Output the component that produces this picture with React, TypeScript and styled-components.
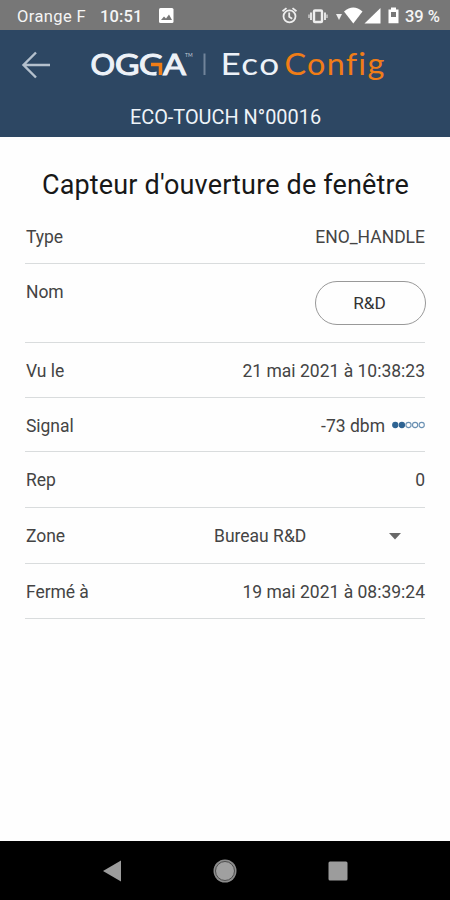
import React from "react";
import styled, { createGlobalStyle } from "styled-components";

const GlobalStyle = createGlobalStyle`
  *, *::before, *::after { box-sizing: border-box; }
  body { margin: 0; background: #fff; }
`;

const Screen = styled.div`
  width: 450px;
  height: 900px;
  display: flex;
  flex-direction: column;
  overflow: hidden;
  background: #fefefe;
  color: #444;
  font-family: Roboto, "Liberation Sans", sans-serif;
`;

const StatusBar = styled.div`
  flex: none;
  height: 30px;
  display: flex;
  align-items: center;
  justify-content: space-between;
  padding: 2px 10px 0 17px;
  background: #777;
  color: #f5f5f5;
  font-size: 16.5px;
  font-weight: 500;
  white-space: nowrap;
`;

const StatusGroup = styled.div`
  display: flex;
  align-items: center;
`;

const Carrier = styled.span`
  width: 83px;
  font-weight: 400;
  letter-spacing: 0.4px;
`;

const Clock = styled.span`
  width: 59px;
  letter-spacing: 0.1px;
`;

const Glyph = styled.svg`
  display: block;
  flex: none;
`;

const Header = styled.header`
  flex: none;
  height: 107px;
  display: flex;
  flex-direction: column;
  background: #2d4763;
`;

const Brand = styled.div`
  height: 70px;
  display: flex;
  align-items: center;
  gap: 16px;
`;

const BackButton = styled.button`
  width: 72px;
  height: 70px;
  padding: 0;
  display: grid;
  place-items: center;
  border: 0;
  background: none;
`;

const Device = styled.div`
  padding: 3px 0 0 1px;
  text-align: center;
  line-height: 30px;
  font-size: 19.9px;
  color: #eef3f8;
`;

const Content = styled.main`
  flex: 1;
  padding: 0 25px;
`;

const Title = styled.h1`
  margin: 0;
  padding: 28px 0 0 1px;
  height: 72px;
  text-align: center;
  white-space: nowrap;
  font-size: 27px;
  line-height: 40px;
  font-weight: 400;
  letter-spacing: 0.16px;
  color: #181818;
`;

const Row = styled.div<{ $height: number }>`
  height: ${(p) => p.$height}px;
  padding-top: 15px;
  display: flex;
  justify-content: space-between;
  align-items: flex-start;
  border-bottom: 1.5px solid #d9dcdd;
  font-size: 17.5px;
  line-height: 26px;
  white-space: nowrap;
`;

const Label = styled.span`
  padding-left: 1px;
  letter-spacing: -0.05px;
`;

const Value = styled.span`
  display: flex;
  align-items: center;
  gap: 7px;
`;

const NameButton = styled.button`
  width: 111px;
  height: 44px;
  margin: 2px -1px 0 0;
  padding: 0 2px 0 0;
  border: 1.4px solid #999;
  border-radius: 22px;
  background: transparent;
  color: #333;
  font: 400 17.2px Roboto, sans-serif;
`;

const ZoneSelect = styled.div`
  width: 211px;
  padding-right: 23px;
  display: flex;
  justify-content: space-between;
  align-items: center;
`;

const NavBar = styled.nav`
  flex: none;
  height: 59px;
  padding: 0 56px;
  display: grid;
  grid-template-columns: repeat(3, 1fr);
  place-items: center;
  background: #000;
`;

const LogoText = styled.text<{ $spacing?: number }>`
  font-family: Lato, sans-serif;
  letter-spacing: ${(p) => p.$spacing ?? 0}px;
  font-variant-ligatures: none;
`;

const StatusIcons = () => (
  <Glyph width="125" height="22" viewBox="280 5 125 22" fill="none">
    <g stroke="#eee" strokeWidth="1.8">
      <circle cx="289.5" cy="16.3" r="6" />
      <path d="M289.2 12.5v4.3l3 2M282.5 11.3l4-3.2M296.5 11.3l-4-3.2" />
    </g>
    <rect x="314" y="10.5" width="8" height="11.5" rx="1" stroke="#eee" strokeWidth="2.4" />
    <path d="M311 12.5v7.5M325 12.5v7.5" stroke="#e2e2e2" strokeWidth="2" />
    <path d="M309 14.5v3.5M327 14.5v3.5" stroke="#ccc" strokeWidth="1.5" />
    <path d="M336 14h6l-3 6z" fill="#eee" />
    <path d="M344 11.5Q353.300 3.500 362.500 11.500L353.300 23.500z" fill="#fff" />
    <path d="M364.5 23.5L380.500 8v15.500z" fill="#fff" />
    <path d="M388.5 9.5h2.500V7.500h5v2h2.500v13.800h-10z" fill="#fff" />
    <rect x="391" y="12" width="5" height="5" fill="#777" />
  </Glyph>
);

const Logo = () => (
  <Glyph width="300" height="50" viewBox="88 40 300 50">
    <defs>
      <clipPath id="accentCut">
        <path d="M136 48h30v13.500h-16v8h6.500v10H136z" />
      </clipPath>
    </defs>
    <g fontSize="29.5" fill="#edf2f8" stroke="#edf2f8" strokeWidth="1.1">
      <LogoText x="90.5" y="75" textLength="24.5" lengthAdjust="spacingAndGlyphs">O</LogoText>
      <LogoText x="115" y="75" textLength="24.5" lengthAdjust="spacingAndGlyphs">G</LogoText>
      <g clipPath="url(#accentCut)">
        <LogoText x="139" y="75" textLength="24.5" lengthAdjust="spacingAndGlyphs">G</LogoText>
      </g>
      <LogoText x="163" y="75" textLength="23" lengthAdjust="spacingAndGlyphs">A</LogoText>
    </g>
    <path d="M151 64.500h9.500V75" fill="none" stroke="#f07d17" strokeWidth="3.500" />
    <LogoText x="185" y="57" fontSize="5" fill="#c3cdd8">TM</LogoText>
    <rect x="203.5" y="53.5" width="2" height="21.5" fill="#71849a" />
    <g fontSize="30.5">
      <LogoText x="220.5" y="75" $spacing={1.2} textLength="60" lengthAdjust="spacingAndGlyphs" fill="#edf2f8">Eco</LogoText>
      <LogoText x="284.5" y="75" $spacing={1.2} textLength="101" lengthAdjust="spacingAndGlyphs" fill="#f07d17">Config</LogoText>
    </g>
  </Glyph>
);

const SignalDots = ({ level }: { level: number }) => (
  <Glyph width="33" height="10" viewBox="0 0 33 10">
    {[0, 1, 2, 3, 4].map((i) => (
      <circle
        key={i}
        cx={3.3 + i * 6.6}
        cy="4"
        r="2.6"
        fill={i < level ? "#2f6493" : "none"}
        stroke={i < level ? "#2f6493" : "#6b91b3"}
        strokeWidth="1.1"
      />
    ))}
  </Glyph>
);

export default function App() {
  return (
    <>
      <GlobalStyle />
      <Screen>
        <StatusBar>
          <StatusGroup>
            <Carrier>Orange F</Carrier>
            <Clock>10:51</Clock>
            <Glyph width="15" height="16" viewBox="0 0 15 16">
              <rect width="14.5" height="15" rx="1.5" fill="#fff" />
              <path d="M2 12l3-3.5 2 2 3-4 3 5.5z" fill="#777" />
            </Glyph>
          </StatusGroup>
          <StatusGroup>
            <StatusIcons />
            <span>39 %</span>
          </StatusGroup>
        </StatusBar>
        <Header>
          <Brand>
            <BackButton aria-label="Retour">
              <Glyph width="30" height="28" viewBox="0 0 30 28" fill="none" stroke="#b4c0cd" strokeWidth="2.4">
                <path d="M29 14H2.5M15 1.5L2.5 14L15 26.5" />
              </Glyph>
            </BackButton>
            <Logo />
          </Brand>
          <Device>ECO-TOUCH N°00016</Device>
        </Header>
        <Content>
          <Title>Capteur d'ouverture de fenêtre</Title>
          <Row $height={55}>
            <Label>Type</Label>
            <Value>ENO_HANDLE</Value>
          </Row>
          <Row $height={79}>
            <Label>Nom</Label>
            <NameButton>R&amp;D</NameButton>
          </Row>
          <Row $height={55}>
            <Label>Vu le</Label>
            <Value>21 mai 2021 à 10:38:23</Value>
          </Row>
          <Row $height={54}>
            <Label>Signal</Label>
            <Value>
              -73 dbm
              <SignalDots level={2} />
            </Value>
          </Row>
          <Row $height={56}>
            <Label>Rep</Label>
            <Value>0</Value>
          </Row>
          <Row $height={56}>
            <Label>Zone</Label>
            <ZoneSelect>
              Bureau R&amp;D
              <Glyph width="14" height="8" viewBox="0 0 14 8">
                <path d="M1 1h12L7 7.5z" fill="#686868" />
              </Glyph>
            </ZoneSelect>
          </Row>
          <Row $height={55}>
            <Label>Fermé à</Label>
            <Value>19 mai 2021 à 08:39:24</Value>
          </Row>
        </Content>
        <NavBar>
          <Glyph width="20" height="22" viewBox="0 0 20 22">
            <path d="M1 11L19 .5v21z" fill="#9c9c9c" />
          </Glyph>
          <Glyph width="24" height="24" viewBox="0 0 24 24">
            <circle cx="12" cy="12" r="11.5" fill="#8c8c8c" />
            <circle cx="12" cy="12" r="9.5" fill="#a0a0a0" stroke="#444" strokeWidth=".9" />
          </Glyph>
          <Glyph width="20" height="20" viewBox="0 0 20 20">
            <rect x=".5" y=".5" width="19" height="19" rx="1.5" fill="#9c9c9c" />
          </Glyph>
        </NavBar>
      </Screen>
    </>
  );
}
